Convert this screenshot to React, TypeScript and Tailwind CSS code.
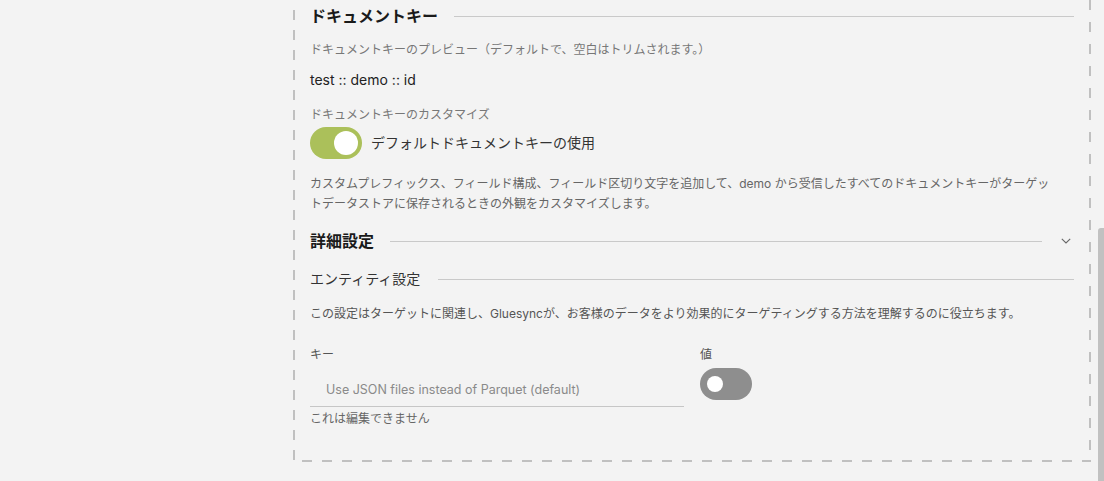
import React from "react";

const font = "font-['Inter','Noto_Sans_CJK_JP',sans-serif]";

function Switch({ on }: { on: boolean }) {
  return (
    <div
      className={
        on
          ? "relative h-[32px] w-[52px] shrink-0 rounded-full bg-[#abc05a]"
          : "relative h-[32px] w-[52px] shrink-0 rounded-full bg-[#8e8e8e]"
      }
    >
      {on ? (
        <span className="absolute right-[4px] top-[4px] h-[24px] w-[24px] rounded-full bg-white" />
      ) : (
        <span className="absolute left-[7px] top-[8px] h-[16px] w-[16px] rounded-full bg-white" />
      )}
    </div>
  );
}

function SectionTitle({ children, size }: { children: React.ReactNode; size: "lg" | "md" }) {
  return (
    <div className={size === "lg" ? "flex h-[32px] items-center" : "flex h-[28px] items-center"}>
      <span
        className={
          size === "lg"
            ? "text-[16px] font-semibold leading-[20px] text-[#1a1a1a]"
            : "text-[14px] leading-[20px] text-[#333]"
        }
      >
        {children}
      </span>
      <div className={size === "lg" ? "ml-4 h-px flex-1 bg-[#c9c9c9]" : "ml-[18px] h-px flex-1 bg-[#c9c9c9]"} />
    </div>
  );
}

export default function App() {
  return (
    <div className={`${font} relative min-h-screen overflow-hidden bg-[#f3f3f3]`}>
      <div className="relative ml-[293px] w-[798px] pb-[34px] pl-[17px] pr-[17px]">
        {/* dashed frame (top is scrolled out of view) */}
        <div className="absolute bottom-0 left-0 top-0 w-[2px] bg-[repeating-linear-gradient(to_top,transparent_0_2px,#c0c0c0_2px_12px,transparent_12px_20px)]" />
        <div className="absolute bottom-0 right-0 top-0 w-[2px] bg-[repeating-linear-gradient(to_top,transparent_0_12px,#c0c0c0_12px_22px,transparent_22px_20px)]" />
        <div className="absolute bottom-0 left-0 right-0 h-[2px] bg-[repeating-linear-gradient(to_right,transparent_0_9px,#c0c0c0_9px_19px,transparent_19px_20px)]" />

        <SectionTitle size="lg">ドキュメントキー</SectionTitle>

        <p className="mt-[9px] text-[12px] leading-[18px] text-[#777]">
          ドキュメントキーのプレビュー（デフォルトで、空白はトリムされます。）
        </p>
        <p className="mt-[11px] text-[14px] leading-[20px] text-[#222]">test :: demo :: id</p>

        <p className="mt-4 text-[12px] leading-[18px] text-[#777]">ドキュメントキーのカスタマイズ</p>
        <div className="mt-[3px] flex items-center gap-[9px]">
          <Switch on />
          <span className="text-[14px] leading-[20px] text-[#333]">デフォルトドキュメントキーの使用</span>
        </div>

        <p className="mt-[15px] pr-[16px] text-[12px] leading-[20px] text-[#666]">
          カスタムプレフィックス、フィールド構成、フィールド区切り文字を追加して、demo から受信したすべてのドキュメントキーがターゲットデータストアに保存されるときの外観をカスタマイズします。
        </p>

        <div className="mt-[11px] flex h-[32px] items-center">
          <span className="text-[16px] font-semibold leading-[20px] text-[#1a1a1a]">詳細設定</span>
          <div className="ml-4 h-px flex-1 bg-[#c9c9c9]" />
          <div className="ml-4 flex h-[32px] w-4 items-center justify-center">
            <svg width="10" height="6" viewBox="0 0 10 6" fill="none">
              <polyline points="0.8,0.8 5,5 9.2,0.8" stroke="#666" strokeWidth="1.1" />
            </svg>
          </div>
        </div>

        <div className="mt-2">
          <SectionTitle size="md">エンティティ設定</SectionTitle>
        </div>

        <p className="mt-[12px] text-[12px] leading-[18px] text-[#555]">
          この設定はターゲットに関連し、Gluesyncが、お客様のデータをより効果的にターゲティングする方法を理解するのに役立ちます。
        </p>

        <div className="mt-[23px] grid grid-cols-2 gap-4">
          <div>
            <p className="text-[12px] leading-[18px] text-[#555]">キー</p>
            <div className="mt-1 border-b border-[#c6c6c6] pb-[8px] pl-4 pt-[13px] text-[12.5px] leading-[17px] text-[#8a8a8a]">
              Use JSON files instead of Parquet (default)
            </div>
            <p className="mt-[3px] text-[12px] leading-[18px] text-[#666]">これは編集できません</p>
          </div>
          <div>
            <p className="text-[12px] leading-[18px] text-[#555]">値</p>
            <div className="mt-1">
              <Switch on={false} />
            </div>
          </div>
        </div>
      </div>

      {/* page scrollbar thumb */}
      <div className="absolute bottom-0 right-0 top-[228px] w-[6px] rounded-tl-[3px] bg-[#c1c1c1]" />
    </div>
  );
}
